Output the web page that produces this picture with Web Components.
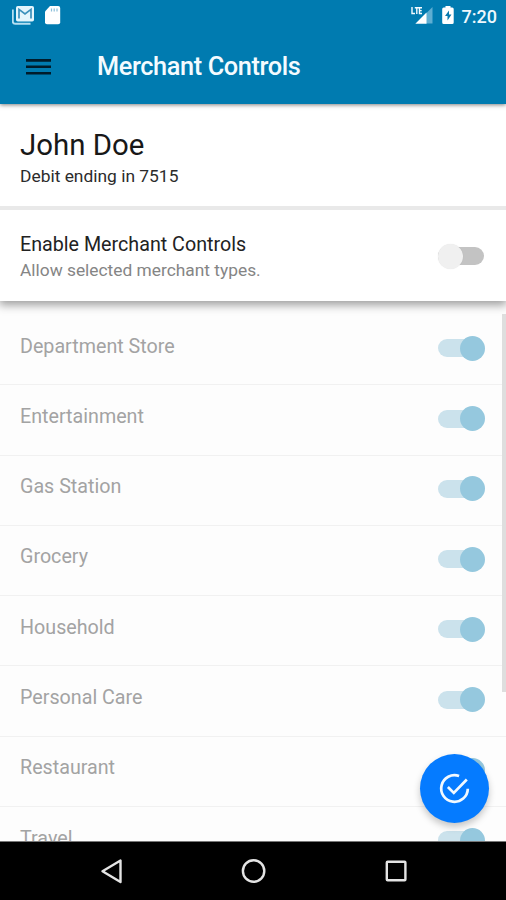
<!DOCTYPE html>
<html lang="en">
<head>
<meta charset="utf-8">
<title>Merchant Controls</title>
<style>
html,body{margin:0;height:100%;overflow:hidden;background:#fff}
body{font-family:Roboto,"Liberation Sans",sans-serif;color:#1c1c1c}
</style>
</head>
<body>
<merchant-app></merchant-app>
<script>
function define(name, html) {
  const t = document.createElement('template');
  t.innerHTML = html;
  customElements.define(name, class extends HTMLElement {
    constructor() {
      super();
      this.attachShadow({mode: 'open'}).append(t.content.cloneNode(true));
    }
  });
}

define('status-bar', `
<style>
:host{display:flex;height:30px;padding:0 9px 0 12px;align-items:center;justify-content:space-between;color:#eef8fd;box-sizing:border-box}
div{display:flex;align-items:center}
svg{display:block;flex:none}
span{font-size:18px;line-height:30px;font-weight:500;margin-left:6px;padding-top:2px;height:30px;box-sizing:border-box}
</style>
<div>
<svg width="52" height="30" viewBox="12 0 52 30">
<path d="M12.800 9.500V21.400a2.400 2.400 0 0 0 2.400 2.400H30.500" fill="none" stroke="#b5dff1" stroke-width="1.900"/>
<rect x="16" y="6" width="18" height="15.500" rx="1.800" fill="#e4f5fc"/>
<path d="M19 18.400V9.400L25 14l6-4.600V18.400" fill="none" stroke="#3b90bb" stroke-width="1.700"/>
<path d="M50 6h8.200a2 2 0 0 1 2 2V22.300a2 2 0 0 1-2 2H47a2 2 0 0 1-2-2V11.500Z" fill="#fff"/>
<path d="M51.500 8.500v3M54.200 8.500v3M57 8.500v3" stroke="#8bbfd9" stroke-width="1.200"/>
</svg>
</div>
<div>
<svg width="46" height="30" viewBox="410 0 46 30">
<path d="M412 7v6.500h3M414.800 7.700h4M416.800 7.500V14M422 7.700h-2.500v5.800h2.500M419.500 10.600h2.200" fill="none" stroke="#f4fbff" stroke-width="1.400"/>
<path d="M432.500 7v16.500h-7V14Z" fill="#5eaed2"/>
<path d="M426.500 12.500v11.200H415.300Z" fill="#fff"/>
<path d="M445.500 6h5v1.600h1.700a1.500 1.500 0 0 1 1.500 1.500v13.400a1.500 1.500 0 0 1-1.500 1.500h-8.500a1.500 1.500 0 0 1-1.500-1.500V9.100a1.500 1.500 0 0 1 1.500-1.500h1.800Z" fill="#fff"/>
<path d="M449 10.500l-4 5.500h2.500v4.500l4-6H449Z" fill="#0879ae"/>
</svg>
<span>7:20</span>
</div>`);

define('app-bar', `
<style>
:host{display:block;height:104px;background:#007bb0;box-shadow:0 1px 4px rgba(0,0,0,.5);position:relative;z-index:2}
.bar{display:flex;align-items:center;height:74px;padding:0 26px}
svg{display:block;flex:none}
h1{margin:0 0 0 46px;font-size:25.300px;line-height:32px;font-weight:500;color:#f4fbff;letter-spacing:-.38px;white-space:nowrap}
</style>
<status-bar></status-bar>
<div class="bar">
<svg width="25" height="18" viewBox="0 0 25 18"><path d="M0 2.400h25M0 8.800h25M0 15.200h25" stroke="#001c2b" stroke-width="2.600"/></svg>
<h1><slot></slot></h1>
</div>`);

define('account-card', `
<style>
:host{display:block;box-sizing:border-box;height:106px;padding:25px 20px 0;background:#fff;border-bottom:4px solid #e9e9e9}
.n{font-size:29.400px;line-height:32px;color:#181818}
.c{font-size:17.400px;line-height:22px;color:#2b2b2b;margin-top:4px}
</style>
<div class="n"><slot name="name"></slot></div>
<div class="c"><slot name="card"></slot></div>`);

define('toggle-switch', `
<style>
:host{display:block;position:relative;width:48px;height:26px;flex:none}
.t{position:absolute;left:0;top:4px;width:45.500px;height:18px;border-radius:9px;background:#c3c3c3}
.k{position:absolute;left:0;top:.5px;width:25px;height:25px;border-radius:50%;background:#f0f0f0;box-shadow:0 0 1px rgba(0,0,0,.12)}
:host([on]) .t{background:#cbe2ec}
:host([on]) .k{left:22px;background:#95c8de;box-shadow:none}
</style>
<div class="t"></div><div class="k"></div>`);

define('master-control', `
<style>
:host{display:flex;box-sizing:border-box;height:91px;padding:1px 20px 0;align-items:center;justify-content:space-between;background:#fff;position:relative;z-index:1;box-shadow:0 3px 9px 1px rgba(0,0,0,.38);clip-path:inset(0 0 -20px 0)}
.a{font-size:19.700px;line-height:26px;color:#222;padding-top:1px}
.b{font-size:17.350px;line-height:24px;color:#858585}
</style>
<div><div class="a"><slot name="label"></slot></div><div class="b"><slot name="hint"></slot></div></div>
<toggle-switch></toggle-switch>`);

define('merchant-row', `
<style>
:host{display:flex;box-sizing:border-box;height:70.300px;flex:none;padding:0 20px;justify-content:space-between;border-bottom:1.500px solid #f1f1f1;font-size:19.700px;color:#a3a3a3}
span{line-height:26px;margin-top:18.500px}
toggle-switch{margin-top:20.300px}
</style>
<span><slot></slot></span><toggle-switch on></toggle-switch>`);

define('merchant-list', `
<style>
:host{display:flex;flex-direction:column;box-sizing:border-box;padding-top:14px;background:#fdfdfd;overflow:hidden;position:relative}
i{position:absolute;right:0;top:13px;width:4px;height:378px;background:#dedede}
</style>
<slot></slot><i></i>`);

define('confirm-fab', `
<style>
:host{position:absolute;left:419.500px;top:754px;width:69px;height:69px;border-radius:50%;background:#057bff;box-shadow:0 4px 7px rgba(0,0,0,.22);z-index:3}
svg{display:block}
</style>
<svg width="69" height="69" viewBox="419.500 754 69 69" fill="none" stroke="#f2f9ff" stroke-width="2.700"><path d="M458.600 776A13.300 13.300 0 1 0 467.300 788.700"/><path d="M447.400 787L453.300 792.900L466.300 779.500"/></svg>`);

define('system-nav', `
<style>
:host{display:block;height:59px;background:#000;border-top:1px solid #777;box-sizing:border-box;position:relative;z-index:4}
svg{display:block}
</style>
<svg width="506" height="58" viewBox="0 842 506 58" fill="none" stroke="#e4e4e4" stroke-width="2.400" stroke-linejoin="round"><path d="M120.500 860.500v21.500L102.500 871.200Z"/><circle cx="253.600" cy="871" r="10.700"/><rect x="386.800" y="861.700" width="18.600" height="18.600" rx=".8"/></svg>`);

define('merchant-app', `
<style>
:host{display:flex;flex-direction:column;position:relative;width:506px;height:900px;overflow:hidden}
app-bar,account-card,master-control,system-nav{flex:none}
merchant-list{flex:1;min-height:0}
</style>
<app-bar>Merchant Controls</app-bar>
<account-card><span slot="name">John Doe</span><span slot="card">Debit ending in 7515</span></account-card>
<master-control><span slot="label">Enable Merchant Controls</span><span slot="hint">Allow selected merchant types.</span></master-control>
<merchant-list>
<merchant-row>Department Store</merchant-row>
<merchant-row>Entertainment</merchant-row>
<merchant-row>Gas Station</merchant-row>
<merchant-row>Grocery</merchant-row>
<merchant-row>Household</merchant-row>
<merchant-row>Personal Care</merchant-row>
<merchant-row>Restaurant</merchant-row>
<merchant-row>Travel</merchant-row>
</merchant-list>
<confirm-fab></confirm-fab>
<system-nav></system-nav>`);
</script>
</body>
</html>
